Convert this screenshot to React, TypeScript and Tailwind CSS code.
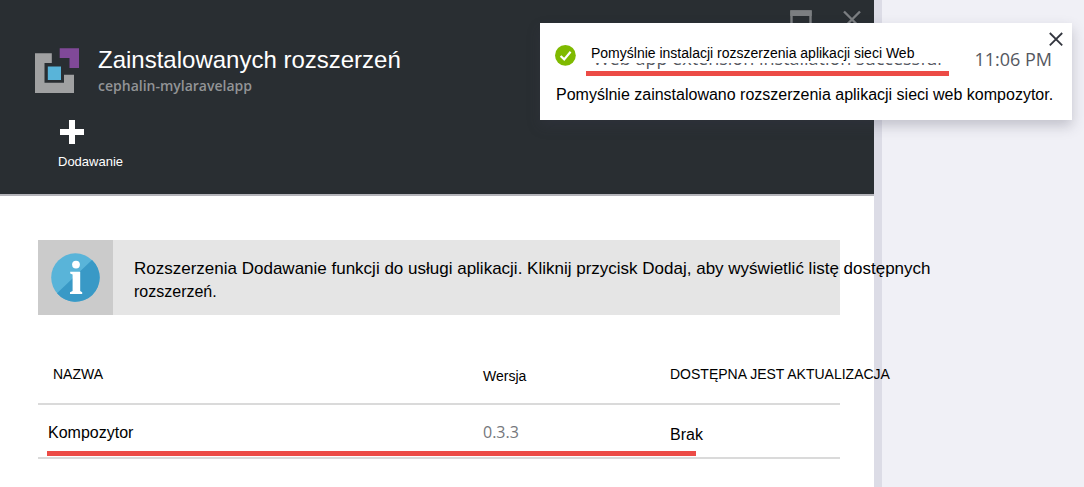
import React from "react";

function AppLogo() {
  return (
    <svg className="h-[46px] w-[46px] shrink-0" viewBox="0 0 46 46" aria-hidden="true">
      <path d="M1 5.3H17.8V15H10.5V34.8H30V26.8H40V45H1Z" fill="#a0a1a2" />
      <path d="M25.7 0.3H45V20H35.5V10H25.7Z" fill="#804998" />
      <rect x="13.8" y="18.5" width="13.2" height="13.5" fill="#59b4d9" />
    </svg>
  );
}

function InfoIcon() {
  return (
    <svg className="h-[50px] w-[50px]" viewBox="0 0 50 50" aria-hidden="true">
      <circle cx="24.4" cy="24.5" r="24.2" fill="#59b4d9" />
      <path d="M41 6.9A24.2 24.2 0 1 1 6 40.2Z" fill="#3999c6" />
      <circle cx="25" cy="11.6" r="3.9" fill="#fff" />
      <path d="M19.2 18.7H29.2V38L31.2 39.2V41H19V39.2L21.6 38V21.6L19.2 20.4Z" fill="#fff" />
    </svg>
  );
}

function Toast() {
  return (
    <section
      role="status"
      className="absolute right-3 top-[23px] w-[532px] bg-white pb-[15px] pl-4 pr-5 pt-[21px] shadow-[0_6px_12px_rgba(60,60,80,0.25)]"
    >
      <button type="button" aria-label="Zamknij" className="absolute right-2 top-2">
        <svg className="h-4 w-4" viewBox="0 0 16 16" fill="none" stroke="#33363f" strokeWidth="1.8">
          <path d="M1.8 2L14.2 14.4M14.2 2L1.8 14.4" />
        </svg>
      </button>
      <div className="flex h-8 items-start">
        <svg className="h-[22px] w-[22px] shrink-0 overflow-visible" viewBox="0 0 22 22" aria-hidden="true">
          <circle cx="9.4" cy="11.4" r="10.4" fill="#7fba00" />
          <path d="M4.6 12L8.2 15.4L14.6 7.8" fill="none" stroke="#fff" strokeWidth="2.2" />
        </svg>
        <div className="relative ml-2 h-8 flex-1">
          <p className="whitespace-nowrap pl-[7px] pt-0.5 font-['Open_Sans',sans-serif] text-[18px] leading-6 text-[#55585f]">
            Web app extension installation successful
          </p>
          <p className="absolute left-0 top-0 w-[363px] whitespace-nowrap bg-white pl-[5px] text-[14px] leading-[19px] text-black">
            Pomyślnie instalacji rozszerzenia aplikacji sieci Web
          </p>
          <div className="absolute bottom-0 left-0 h-[5px] w-[363px] bg-[#ec4b46]" />
        </div>
        <time className="pt-[3px] font-['Open_Sans',sans-serif] text-[18px] leading-6 text-[#55585f]">11:06 PM</time>
      </div>
      <p className="mt-2 whitespace-nowrap text-[16px] leading-[21px] text-black">
        Pomyślnie zainstalowano rozszerzenia aplikacji sieci web kompozytor.
      </p>
    </section>
  );
}

export default function App() {
  return (
    <div className="relative flex min-h-screen overflow-hidden bg-[#f0f0f6] pr-[202px] font-['Liberation_Sans',Arial,sans-serif]">
      <main className="min-w-0 flex-1 border-r-8 border-[#dcdce6] bg-white">
        <header className="relative flex h-[196px] flex-col border-b-2 border-[#b4b4ba] bg-[#292e32] pl-[34px] pt-12">
          <div className="absolute right-3 top-2.5 flex gap-[30px] text-[#7b7e81]">
            <button type="button" aria-label="Maksymalizuj">
              <svg className="h-[22px] w-[22px]" viewBox="0 0 22 22" fill="none" stroke="currentColor" strokeWidth="2.4">
                <path d="M1.5 1.5H20.5V20H1.5Z" />
                <path d="M0.3 3.2H21.7" strokeWidth="5.6" />
              </svg>
            </button>
            <button type="button" aria-label="Zamknij okno">
              <svg className="h-[22px] w-[20px]" viewBox="0 0 20 22" fill="none" stroke="currentColor" strokeWidth="2.4">
                <path d="M2 1.5L18 17.5M18 1.5L2 17.5" />
              </svg>
            </button>
          </div>
          <div className="flex gap-[18px]">
            <AppLogo />
            <div>
              <h1 className="text-[24px] leading-6 text-white">Zainstalowanych rozszerzeń</h1>
              <p className="mt-1 font-['Open_Sans',sans-serif] text-[14px] font-semibold leading-5 text-[#929496]">
                cephalin-mylaravelapp
              </p>
            </div>
          </div>
          <button type="button" className="ml-6 mt-6 flex w-fit flex-col items-start gap-2 text-[13px] leading-5 text-white">
            <svg className="ml-0.5 h-6 w-6" viewBox="0 0 24 24" fill="currentColor" aria-hidden="true">
              <path d="M9 0H15V9H24V15H15V24H9V15H0V9H9Z" />
            </svg>
            Dodawanie
          </button>
        </header>

        <div className="pl-[38px] pr-[34px] pt-11">
          <div className="flex h-[75px] bg-[#e5e5e5]">
            <div className="flex w-[75px] shrink-0 items-center justify-center bg-[#cbcbcb]">
              <InfoIcon />
            </div>
            <p className="whitespace-nowrap pl-[21px] pt-[17px] text-[16px] leading-[23px] text-black">
              <span className="block text-[17px]">
                Rozszerzenia Dodawanie funkcji do usługi aplikacji. Kliknij przycisk Dodaj, aby wyświetlić listę dostępnych
              </span>
              rozszerzeń.
            </p>
          </div>

          <div className="relative mt-7">
            <table className="w-full table-fixed text-left text-black">
              <colgroup>
                <col className="w-[445px]" />
                <col className="w-[187px]" />
                <col />
              </colgroup>
              <thead>
                <tr className="h-[61px] border-b-2 border-[#dadada] text-[14px]">
                  <th className="pl-[15px] pt-0.5 font-normal">NAZWA</th>
                  <th className="pt-1.5 font-normal">Wersja</th>
                  <th className="whitespace-nowrap pt-0.5 font-normal">DOSTĘPNA JEST AKTUALIZACJA</th>
                </tr>
              </thead>
              <tbody>
                <tr className="h-[54px] border-b-2 border-[#dadada] text-[16px]">
                  <td className="pl-2.5 pt-1">Kompozytor</td>
                  <td className="pt-0.5 font-['Open_Sans',sans-serif] text-[#75777c]">0.3.3</td>
                  <td className="pt-2">Brak</td>
                </tr>
              </tbody>
            </table>
            <div className="absolute bottom-[3px] left-[9px] h-[5px] w-[649px] bg-[#ec4b46]" />
          </div>
        </div>
      </main>
      <Toast />
    </div>
  );
}
